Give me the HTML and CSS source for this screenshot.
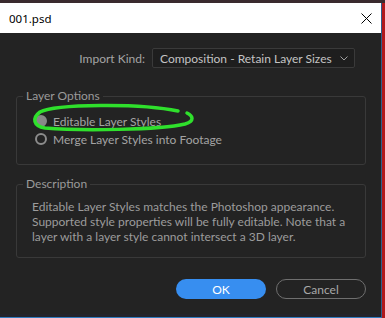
FILE: index.html
```html
<!DOCTYPE html>
<html>
<head>
<meta charset="utf-8">
<link rel="stylesheet" href="styles.css">
</head>
<body>
<div class="screen">
  <div class="window">
    <div class="titlebar">
      <span class="title">001.psd</span>
      <svg class="close" width="11" height="11" viewBox="0 0 11 11"><path d="M0.5 0.5 L10.5 10.5 M10.5 0.5 L0.5 10.5" stroke="#000" stroke-width="1" fill="none"/></svg>
    </div>
    <div class="content">
      <div class="import-row">
        <span class="label">Import Kind:</span>
        <div class="select">
          <span>Composition - Retain Layer Sizes</span>
          <svg width="8" height="5" viewBox="0 0 8 5"><path d="M0.5 0.5 L4 4 L7.5 0.5" stroke="#a0a0a0" stroke-width="1" fill="none"/></svg>
        </div>
      </div>
      <fieldset class="group layer-options">
        <legend>Layer Options</legend>
        <div class="group-body">
          <div class="radio-row"><span class="radio filled"></span><span class="radio-label">Editable Layer Styles</span></div>
          <div class="radio-row"><span class="radio"></span><span class="radio-label">Merge Layer Styles into Footage</span></div>
        </div>
      </fieldset>
      <fieldset class="group description">
        <legend>Description</legend>
        <p class="group-body">Editable Layer Styles matches the Photoshop appearance.<br>Supported style properties will be fully editable. Note that a<br>layer with a layer style cannot intersect a 3D layer.</p>
      </fieldset>
      <div class="buttons">
        <button class="btn primary">OK</button>
        <button class="btn secondary">Cancel</button>
      </div>
    </div>
  </div>
  <div class="outside"></div>
</div>
<svg class="scribble" width="385" height="318" viewBox="0 0 385 318"><path d="M187 113 C193 116 195 121 185 124 C160 130 80 131 45 128 C33 126 32 118 40 112 C55 104 140 103 178 111" stroke="#2fe02c" stroke-width="3.5" fill="none" stroke-linecap="round"/></svg>
</body>
</html>
```

FILE: styles.css
```css
html, body {
  margin: 0;
  padding: 0;
}
body {
  width: 385px;
  height: 318px;
  overflow: hidden;
  background: #23232a;
  font-family: Lato, "Noto Sans", sans-serif;
  position: relative;
}
.screen {
  display: flex;
  padding-top: 3px;
  background: linear-gradient(#3a2a2e, #3a2a2e) top / 100% 3px no-repeat;
}
.window {
  width: 382px;
  border-right: 1px solid #2c5f8e;
  border-bottom: 1px solid #2f7bbd;
  box-sizing: border-box;
}
.outside {
  flex: 1;
  height: 315px;
  background: #b0181c;
}
.titlebar {
  height: 30px;
  background: #ffffff;
  display: flex;
  align-items: center;
  justify-content: space-between;
  padding: 0 9px 0 9px;
  box-sizing: border-box;
}
.title {
  font-family: "Noto Sans", sans-serif;
  font-size: 11.5px;
  color: #000;
}
.close {
  display: block;
}
.content {
  background: #232323;
  height: 281px;
  padding: 15px 15px 0 16px;
  box-sizing: border-box;
}
.import-row {
  display: flex;
  justify-content: flex-end;
  align-items: center;
  gap: 7px;
  padding-right: 11px;
  height: 20px;
}
.label {
  font-size: 12px;
  color: #a5a5a5;
}
.select {
  width: 203px;
  height: 20px;
  box-sizing: border-box;
  border: 1px solid #3a3a3a;
  border-radius: 2px;
  background: #1e1e1e;
  display: flex;
  align-items: center;
  justify-content: space-between;
  padding: 0 6px 0 7px;
  font-size: 12px;
  color: #c4c4c4;
}
.select svg {
  display: block;
}
.group {
  margin: 0;
  border: 1px solid #393939;
  border-radius: 3px;
  padding: 0;
  min-width: 0;
}
.group legend {
  margin-left: 6px;
  padding: 0 3px;
  font-size: 12px;
  line-height: 14px;
  color: #9a9a9a;
}
.layer-options {
  margin-top: 21px;
}
.layer-options .group-body {
  padding: 9px 0 16px 18px;
}
.radio-row {
  height: 18px;
  display: flex;
  align-items: center;
  gap: 6px;
}
.radio {
  width: 12px;
  height: 12px;
  box-sizing: border-box;
  border-radius: 50%;
  border: 2px solid #8c8c8c;
}
.radio.filled {
  background: #888888;
  border-color: #888888;
}
.radio-label {
  font-size: 12px;
  color: #a3a3a3;
}
.description {
  margin-top: 12px;
}
.description .group-body {
  margin: 0;
  padding: 8px 0 13px 15px;
  font-size: 12px;
  line-height: 15px;
  color: #9c9c9c;
}
.buttons {
  display: flex;
  justify-content: flex-end;
  gap: 10px;
  margin-top: 21px;
}
.btn {
  width: 90px;
  height: 20px;
  border-radius: 10px;
  font-family: Lato, "Noto Sans", sans-serif;
  font-size: 12px;
  padding: 0;
  box-sizing: border-box;
}
.primary {
  background: #378ef0;
  border: none;
  color: #ffffff;
}
.secondary {
  background: transparent;
  border: 1px solid #6f6f6f;
  color: #a8a8a8;
}
.scribble {
  position: absolute;
  left: 0;
  top: 0;
  pointer-events: none;
}
```
